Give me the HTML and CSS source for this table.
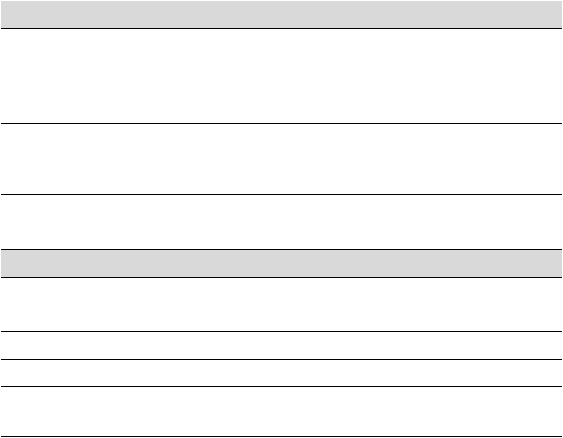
FILE: index.html
```html
<!DOCTYPE html>
<html>
<head>
<meta charset="utf-8">
<link rel="stylesheet" href="styles.css">
</head>
<body>
<div class="page">
  <div class="tbl tbl-first">
    <div class="head"></div>
    <div class="row r1"></div>
    <div class="row r2"></div>
  </div>
  <div class="tbl tbl-second">
    <div class="head"></div>
    <div class="row r3"></div>
    <div class="row r4"></div>
    <div class="row r5"></div>
    <div class="row r6"></div>
  </div>
</div>
</body>
</html>
```
FILE: styles.css
```css
html, body {
  margin: 0;
  padding: 0;
  background: #fff;
  font-family: "Liberation Sans", Arial, sans-serif;
}
.page {
  padding: 1px 1px 0 1px;
  display: flex;
  flex-direction: column;
}
.tbl {
  display: flex;
  flex-direction: column;
}
.tbl-second {
  margin-top: 54px;
  border-top: 1px solid #000;
}
.head {
  height: 27px;
  background: #d9d9d9;
  border-bottom: 1px solid #000;
}
.row {
  border-bottom: 1px solid #000;
}
.r1 { height: 94px; }
.r2 { height: 70px; }
.r3 { height: 53px; }
.r4 { height: 27px; }
.r5 { height: 26px; }
.r6 { height: 49px; }
```
